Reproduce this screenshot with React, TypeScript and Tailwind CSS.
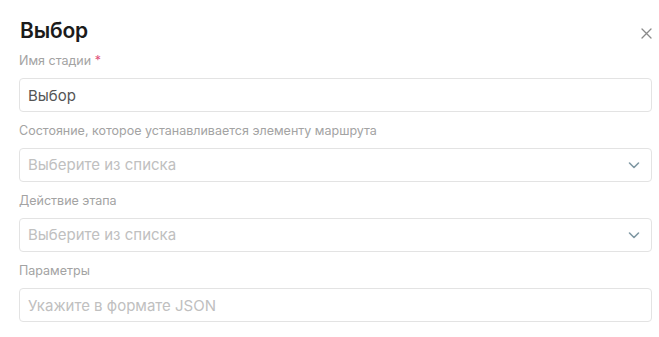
import { useState } from 'react';

const fieldLabel = 'text-[12.5px] leading-[16px] text-[#a3a3a3] mb-[9px]';
const box =
  'h-[34px] w-full rounded-[4px] border border-[#e3e3e3] bg-white pl-[8px] text-[15px] outline-none flex items-center';

function Chevron() {
  return (
    <svg width="14" height="14" viewBox="0 0 14 14" fill="none">
      <path d="M2.5 5l4.5 4.5L11.5 5" stroke="#7f98a3" strokeWidth="1.6" strokeLinecap="round" strokeLinejoin="round" />
    </svg>
  );
}

function SelectBox({ placeholder }: { placeholder: string }) {
  return (
    <div className={box + ' justify-between pr-[10px]'}>
      <span className="text-[#c0c0c0]">{placeholder}</span>
      <Chevron />
    </div>
  );
}

export default function App() {
  const [name, setName] = useState('Выбор');

  return (
    <div className="min-h-screen bg-white font-['Inter',sans-serif]">
      <div className="w-[652px] pl-[19px] pt-[17px]">
        <div className="flex items-center justify-between h-[28px] mb-[8px]">
          <h1 className="text-[21px] font-semibold text-[#1b1b1b] tracking-[-0.2px] pl-[1px]">Выбор</h1>
          <button className="w-[16px] h-[16px] flex items-center justify-center mr-[-2px] mt-[4px]">
            <svg width="11" height="11" viewBox="0 0 11 11">
              <path d="M1 1l9 9M10 1l-9 9" stroke="#8a8a8a" strokeWidth="1.3" strokeLinecap="round" />
            </svg>
          </button>
        </div>

        <div className="mb-[11px]">
          <div className={fieldLabel}>
            Имя стадии <span className="text-[#e0527a]">*</span>
          </div>
          <input
            value={name}
            onChange={(e) => setName(e.target.value)}
            className={box + ' text-[#555]'}
          />
        </div>

        <div className="mb-[11px]">
          <div className={fieldLabel}>Состояние, которое устанавливается элементу маршрута</div>
          <SelectBox placeholder="Выберите из списка" />
        </div>

        <div className="mb-[11px]">
          <div className={fieldLabel}>Действие этапа</div>
          <SelectBox placeholder="Выберите из списка" />
        </div>

        <div>
          <div className={fieldLabel}>Параметры</div>
          <input placeholder="Укажите в формате JSON" className={box + ' placeholder:text-[#c0c0c0]'} />
        </div>
      </div>
    </div>
  );
}
